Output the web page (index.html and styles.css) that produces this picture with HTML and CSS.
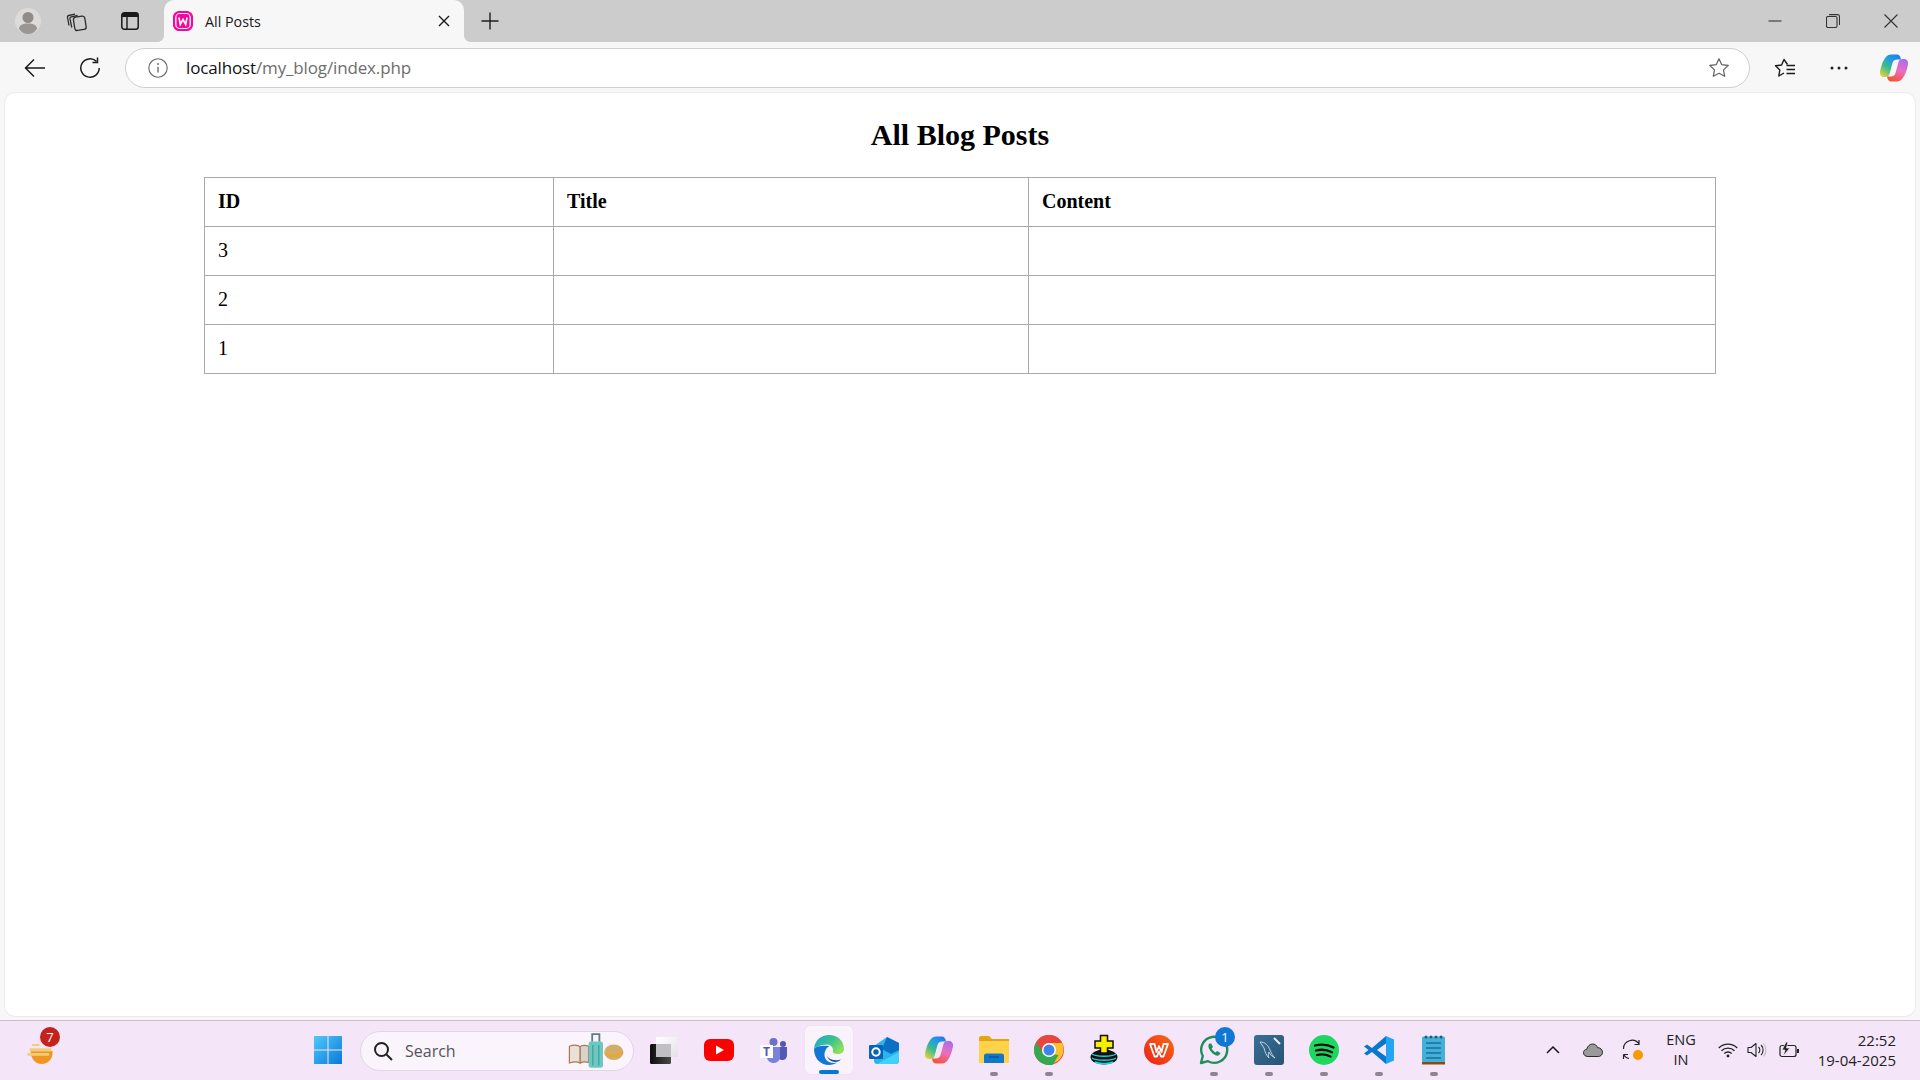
FILE: index.html
```html
<!DOCTYPE html>
<html lang="en">
<head>
<meta charset="utf-8">
<title>All Posts</title>
<link rel="stylesheet" href="styles.css">
</head>
<body>
<div class="window">
  <header class="tabstrip">
    <div class="strip-btn profile">
      <svg width="26" height="26" viewBox="0 0 26 26"><circle cx="13" cy="13" r="13" fill="#dcdbd9"/><circle cx="13" cy="9.5" r="5.5" fill="#8f8c88"/><path d="M4 21c0-4 4-5.500 9-5.500s9 1.500 9 5.500c-2 3-5.500 5-9 5s-7-2-9-5z" fill="#9a9793"/></svg>
    </div>
    <div class="strip-btn">
      <svg width="22" height="22" viewBox="0 0 22 22" fill="none" stroke="#2b2b2b" stroke-width="1.300"><path d="M3 15.500 1.500 7.500c-.2-1 .3-1.800 1.300-2L9 4.200"/><path d="M5.800 17.500 4 8.800c-.2-1 .3-1.800 1.300-2l6.300-1.300"/><rect x="8" y="6.500" width="11.500" height="13.500" rx="2.500" transform="rotate(-9 14 13)"/></svg>
    </div>
    <div class="strip-btn">
      <svg width="20" height="20" viewBox="0 0 20 20"><rect x="1.800" y="1.800" width="16.400" height="16.400" rx="2.500" fill="none" stroke="#1a1a1a" stroke-width="1.500"/><path d="M2 2h16v4H2z" fill="#1a1a1a"/><path d="M7 6v12" stroke="#1a1a1a" stroke-width="1.400"/></svg>
    </div>
    <div class="tab">
      <svg class="favicon" width="20" height="20" viewBox="0 0 20 20"><rect x="1" y="1" width="18" height="18" rx="5.500" fill="none" stroke="#f5069f" stroke-width="2.200"/><rect x="3.500" y="3" width="13" height="14" rx="3" fill="#f5069f"/><path d="M6 6.500 7.300 13.500 10 8.500 12.700 13.500 14 6.500" fill="none" stroke="#fff" stroke-width="1.600"/></svg>
      <span class="tab-title">All Posts</span>
      <svg class="tab-close" width="12" height="12" viewBox="0 0 12 12"><path d="M1 1l10 10M11 1 1 11" stroke="#1a1a1a" stroke-width="1.400"/></svg>
    </div>
    <div class="new-tab">
      <svg width="18" height="18" viewBox="0 0 18 18"><path d="M9 .5v17M.5 9h17" stroke="#1f1f1f" stroke-width="1.400"/></svg>
    </div>
    <div class="win-controls">
      <div class="win-btn"><svg width="14" height="14" viewBox="0 0 14 14"><path d="M.5 7h13" stroke="#333" stroke-width="1.100"/></svg></div>
      <div class="win-btn"><svg width="14" height="14" viewBox="0 0 14 14" fill="none" stroke="#333" stroke-width="1.100"><rect x=".5" y="2.500" width="10.500" height="11" rx="1.500"/><path d="M3 .6h8.500c1.200 0 2 .8 2 2V11"/></svg></div>
      <div class="win-btn"><svg width="14" height="14" viewBox="0 0 14 14"><path d="M.5.500l13 13M13.500.500l-13 13" stroke="#333" stroke-width="1.100"/></svg></div>
    </div>
  </header>

  <nav class="toolbar">
    <div class="tool-btn"><svg width="22" height="20" viewBox="0 0 22 20" fill="none" stroke="#1a1a1a" stroke-width="1.500"><path d="M21 10H1.500M10 1.500 1.500 10l8.500 8.500"/></svg></div>
    <div class="tool-btn"><svg width="22" height="22" viewBox="0 0 22 22" fill="none" stroke="#1a1a1a" stroke-width="1.500"><path d="M17.500 4.500A9.200 9.200 0 1 0 20.200 11"/><path d="M18.500 .5v5h-5"/></svg></div>
    <div class="address">
      <svg width="20" height="20" viewBox="0 0 20 20"><circle cx="10" cy="10" r="9.200" fill="none" stroke="#666" stroke-width="1.100"/><path d="M10 8.800v5.700" stroke="#666" stroke-width="1.300"/><circle cx="10" cy="6" r=".9" fill="#666"/></svg>
      <span class="url"><span class="url-host">localhost</span>/my_blog/index.php</span>
      <svg class="fav-star" width="22" height="22" viewBox="0 0 22 22"><path d="M11 1.800l2.800 5.900 6.400.8-4.700 4.400 1.200 6.400L11 16.200l-5.700 3.100 1.200-6.400L1.800 8.500l6.400-.8z" fill="none" stroke="#6a6a6a" stroke-width="1.300" stroke-linejoin="round"/></svg>
    </div>
    <div class="tool-right">
      <div class="tool-btn"><svg width="22" height="20" viewBox="0 0 22 20" fill="none" stroke="#1a1a1a" stroke-width="1.400" stroke-linejoin="round"><path d="M13.500 6.500 10 1.500 7.600 7 1.500 7.800 5.800 12l-1 6 5.200-3"/><path d="M12.500 7.500H21M12.500 11.500H21M12.500 15.500H21" stroke-width="1.300"/></svg></div>
      <div class="tool-btn"><svg width="18" height="4" viewBox="0 0 18 4"><circle cx="2" cy="2" r="1.500" fill="#222"/><circle cx="9" cy="2" r="1.500" fill="#222"/><circle cx="16" cy="2" r="1.500" fill="#222"/></svg></div>
      <div class="tool-btn copilot-btn">
        <svg width="30" height="30" viewBox="0 0 30 30"><defs><linearGradient id="cp1" x1=".1" y1="1" x2=".8" y2="0"><stop offset="0" stop-color="#efd23a"/><stop offset=".4" stop-color="#3dbd88"/><stop offset=".75" stop-color="#1f9ae8"/><stop offset="1" stop-color="#1e7fe6"/></linearGradient><linearGradient id="cp2" x1=".4" y1="1" x2=".8" y2="0"><stop offset="0" stop-color="#f4553a"/><stop offset=".5" stop-color="#ea6fc0"/><stop offset="1" stop-color="#a56df0"/></linearGradient></defs><path d="M12 1.500h6c2 0 3 1.500 3.500 3l.5 2h-3.500c-3 0-4.500 1.500-5 3.500L10.500 21c-.5 2-2 3-4 3H5C2 24 .5 21.500 1 18.500 2 13 4 7.500 6.500 4.500 8 2.500 10 1.500 12 1.500z" fill="url(#cp1)"/><path d="M18 28.500h-6c-2 0-3-1.500-3.500-3l-.5-2h3.500c3 0 4.500-1.500 5-3.500L19.500 9c.5-2 2-3 4-3H25c3 0 4.500 2.500 4 5.500-1 5.500-3 11-5.500 14-1.500 2-3.500 3-5.500 3z" fill="url(#cp2)"/></svg>
      </div>
    </div>
  </nav>

  <main class="page">
    <h2 class="page-title">All Blog Posts</h2>
    <table class="posts">
      <colgroup><col class="col-id"><col class="col-title"><col class="col-content"></colgroup>
      <thead><tr><th>ID</th><th>Title</th><th>Content</th></tr></thead>
      <tbody>
        <tr><td>3</td><td></td><td></td></tr>
        <tr><td>2</td><td></td><td></td></tr>
        <tr><td>1</td><td></td><td></td></tr>
      </tbody>
    </table>
  </main>

  <footer class="taskbar">
    <div class="widget">
      <svg width="29" height="26" viewBox="0 0 26 24"><path d="M4 11h20c1 7-4 12-10 12S4 18 4 11z" fill="#f0961e"/><path d="M3 8.500h20v3H3zM1 13h20v2.500H1zM5 4.500h7v2H5z" fill="#f1cc7c"/></svg>
      <span class="widget-badge">7</span>
    </div>
    <div class="tb-cell">
      <svg width="30" height="30" viewBox="0 0 30 30"><defs><linearGradient id="w1" x1="0" y1="0" x2="1" y2="1"><stop offset="0" stop-color="#4fc9fb"/><stop offset="1" stop-color="#0a78d8"/></linearGradient></defs><path d="M1 1h13.500v13.500H1zM15.500 1H29v13.500H15.500zM1 15.500h13.500V29H1zM15.500 15.500H29V29H15.500z" fill="url(#w1)"/></svg>
    </div>
    <div class="search">
      <svg width="20" height="20" viewBox="0 0 20 20" fill="none" stroke="#222" stroke-width="2"><circle cx="8.500" cy="8.500" r="6.500"/><path d="M13.500 13.500 19 19"/></svg>
      <span class="search-text">Search</span>
      <svg class="search-art" width="58" height="36" viewBox="0 0 48 30"><path d="M1 11c3-1 7-1 9 .5V25c-2-1-6-1-9 0z" fill="#e9e1d6" stroke="#a77a55"/><path d="M17 11c-2-1-6-1-7 .5V25c2-1 5-1 7-.5z" fill="#d8d2c8" stroke="#a77a55"/><rect x="17" y="7" width="12" height="22" rx="2" fill="#6cc9c1"/><path d="M20 7V1h6v6" fill="none" stroke="#5a7c86" stroke-width="1.500"/><path d="M20.500 10v17M25.500 10v17" stroke="#3f9f98"/><ellipse cx="38" cy="16" rx="8" ry="6.500" fill="#d4ad6a"/><path d="M31 17c3 3 10 3 14-1" fill="none" stroke="#e6a92e" stroke-width="2"/></svg>
    </div>
    <div class="tb-icons">
      <div class="tb-cell">
        <svg width="30" height="30" viewBox="0 0 30 30"><defs><linearGradient id="bx1" x1="0" y1="0" x2="1" y2="0"><stop offset="0" stop-color="#0d0d0d"/><stop offset="1" stop-color="#4a4a4a"/></linearGradient><linearGradient id="bx2" x1="0" y1="0" x2="1" y2="1"><stop offset="0" stop-color="#fff"/><stop offset="1" stop-color="#e6dfe8"/></linearGradient></defs><rect x="1" y="9" width="21" height="20" rx="1.500" fill="url(#bx1)"/><rect x="7" y="2" width="22" height="20" rx="1" fill="url(#bx2)"/><rect x="7" y="9" width="15" height="13" fill="#c2bfc4"/></svg>
      </div>
      <div class="tb-cell">
        <svg width="30" height="22" viewBox="0 0 30 22"><rect width="30" height="22" rx="6" fill="#fe0000"/><path d="M12 6.500v9l8-4.500z" fill="#fff"/></svg>
      </div>
      <div class="tb-cell">
        <svg width="30" height="26" viewBox="0 0 30 26"><circle cx="14.500" cy="5" r="4" fill="#6e6fc8"/><circle cx="24" cy="7" r="3" fill="#5458b0"/><path d="M18 10h10v8c0 3-2 5-4.500 5S18 21 18 18z" fill="#5458b0"/><path d="M8 10h13v10c0 3.500-3 6-6.500 6S8 23.500 8 20z" fill="#7b83d8"/><rect x="1" y="8" width="13" height="13" fill="#fff"/><text x="7.500" y="18.500" class="teams-t">T</text></svg>
      </div>
      <div class="tb-cell edge-cell">
        <div class="edge-tile">
          <svg width="32" height="32" viewBox="0 0 32 32"><defs><linearGradient id="e1" x1="0" y1="0" x2="1" y2=".6"><stop offset="0" stop-color="#18a4d8"/><stop offset=".6" stop-color="#3cc48c"/><stop offset="1" stop-color="#8fe05a"/></linearGradient></defs><path d="M1 15C1.500 6.500 8 1 16 1c8.500 0 15 6 15 14 0 3-2.500 5-6.500 5-3 0-5-1-4.500-2.500.8-2-1-7-6-7-6 0-12 3-13.500 4.500z" fill="url(#e1)"/><path d="M1 15c0 9 6 16 15 16 3 0 6-1 8-2.500-6 1.500-12-1-12.500-7-.3-4 2-8 5-9.500C10 11 3 12 1 15z" fill="#1277d2"/><path d="M14 22c1 4 6 7 11 5.500 1-.5 2-1 3-2-5 1.500-12 .5-14-3.500z" fill="#0c59a4"/></svg>
          <span class="indicator-active"></span>
        </div>
      </div>
      <div class="tb-cell">
        <svg width="30" height="28" viewBox="0 0 30 28"><path d="M5 10 18 1l12 6v18c0 1.500-1 3-3 3H8c-2 0-3-1.500-3-3z" fill="#2ab4ee"/><path d="M18 1 30 7v7l-8 4-9-5z" fill="#0a70c4"/><path d="M8 28l22-12v9c0 1.500-1 3-3 3z" fill="#45d0f8"/><rect y="9" width="14" height="14" rx="1" fill="#0a64b4"/><circle cx="7" cy="16" r="3.700" fill="none" stroke="#fff" stroke-width="2"/></svg>
      </div>
      <div class="tb-cell">
        <svg width="30" height="30" viewBox="0 0 30 30"><defs><linearGradient id="cp3" x1=".1" y1="1" x2=".8" y2="0"><stop offset="0" stop-color="#efd23a"/><stop offset=".4" stop-color="#3dbd88"/><stop offset=".75" stop-color="#1f9ae8"/><stop offset="1" stop-color="#1e7fe6"/></linearGradient><linearGradient id="cp4" x1=".4" y1="1" x2=".8" y2="0"><stop offset="0" stop-color="#f4553a"/><stop offset=".5" stop-color="#ea6fc0"/><stop offset="1" stop-color="#a56df0"/></linearGradient></defs><path d="M12 1.500h6c2 0 3 1.500 3.500 3l.5 2h-3.500c-3 0-4.500 1.500-5 3.500L10.500 21c-.5 2-2 3-4 3H5C2 24 .5 21.500 1 18.500 2 13 4 7.500 6.500 4.500 8 2.500 10 1.500 12 1.500z" fill="url(#cp3)"/><path d="M18 28.500h-6c-2 0-3-1.500-3.500-3l-.5-2h3.500c3 0 4.500-1.500 5-3.500L19.500 9c.5-2 2-3 4-3H25c3 0 4.500 2.500 4 5.500-1 5.500-3 11-5.500 14-1.500 2-3.500 3-5.500 3z" fill="url(#cp4)"/></svg>
      </div>
      <div class="tb-cell running">
        <svg width="30" height="27" viewBox="0 0 30 27"><path d="M0 2c0-1 .8-2 2-2h8l3 3h17v4H0z" fill="#e5a50f"/><path d="M0 5h30v22H0z" fill="#ffd24a"/><path d="M5 20c0-1.500 1-2.500 2.500-2.500h15c1.500 0 2.500 1 2.500 2.500v7H5z" fill="#0f78c8"/><path d="M10 21h10" stroke="#0a4f8a" stroke-width="1.200"/></svg>
      </div>
      <div class="tb-cell running">
        <svg width="30" height="30" viewBox="0 0 30 30"><circle cx="15" cy="15" r="15" fill="#e8453c"/><path d="M15 8h13.200a15 15 0 0 1-9 20.400L9.500 18z" fill="#fbc02d"/><path d="M2 7.500A15 15 0 0 0 19.200 29.400L24.500 20 9.500 18z" fill="#34a853"/><path d="M2 7.500A15 15 0 0 1 28.200 8H15c-3.500 0-6 2-6.800 4.500z" fill="#e8453c"/><circle cx="15" cy="15" r="7" fill="#fff"/><circle cx="15" cy="15" r="5.500" fill="#3f83e8"/></svg>
      </div>
      <div class="tb-cell">
        <svg width="30" height="32" viewBox="0 0 30 32"><ellipse cx="15" cy="23" rx="13.500" ry="7.500" fill="#111"/><path d="M3 20c4 3 20 3 24 0M3 24c4 3 20 3 24 0M6 28c4 2 14 2 18 0" fill="none" stroke="#18d4d8" stroke-width="1.500"/><path d="M11.500 1.500h7v5.500H24v7h-5.500v5h-7v-5H6V7h5.500z" fill="#f7f000" stroke="#111" stroke-width="1.500"/></svg>
      </div>
      <div class="tb-cell">
        <svg width="30" height="30" viewBox="0 0 30 30"><defs><linearGradient id="wps" x1="0" y1="1" x2="1" y2="0"><stop offset="0" stop-color="#e8201c"/><stop offset="1" stop-color="#fb6a10"/></linearGradient></defs><circle cx="15" cy="15" r="15" fill="url(#wps)"/><path d="M6 9h4.500l2 8 2.500-6 2.500 6 2-8H24l-4.500 12.500h-2.500L15 16.500l-2 5h-2.500z" fill="none" stroke="#fff" stroke-width="1.800" stroke-linejoin="round"/></svg>
      </div>
      <div class="tb-cell running badge-host">
        <svg width="30" height="30" viewBox="0 0 30 30"><path d="M2 28l1.800-7A13 13 0 1 1 9 26.200z" fill="none" stroke="#1f8e5e" stroke-width="2.400" stroke-linejoin="round"/><path d="M10.500 8.500c-1.500 1-1.500 3.500 0 6 1.500 3 4 5 6.500 6 2 .5 4-.5 4.500-2.500l-3.500-2-1.500 1.500c-1.500-.8-3-2.500-3.800-4l1.300-1.500-1.800-3.500z" fill="#1f8e5e"/></svg>
        <span class="tb-badge">1</span>
      </div>
      <div class="tb-cell running">
        <svg width="30" height="30" viewBox="0 0 30 30"><defs><linearGradient id="my" x1="0" y1="0" x2="1" y2="1"><stop offset="0" stop-color="#3a6f94"/><stop offset="1" stop-color="#265475"/></linearGradient></defs><rect width="30" height="30" rx="3" fill="url(#my)"/><path d="M6 7c5 0 8 3 10 8 1 3 3 6 5 8-3-2-5-3-6-6-1 2-1 4 0 6-3-3-4-6-5-10-1-2-3-4-4-6z" fill="none" stroke="#cfdde6" stroke-width=".9"/><path d="M20 3l6 6" stroke="#e6eef3" stroke-width="2"/></svg>
      </div>
      <div class="tb-cell running">
        <svg width="30" height="30" viewBox="0 0 30 30"><circle cx="15" cy="15" r="15" fill="#1ed760"/><path d="M6 10.500c6-1.500 13-1 18.500 2M7 15.500c5-1.300 11-.8 16 1.800M8 20c4-1 9-.7 13.500 1.500" fill="none" stroke="#111" stroke-width="2.300" stroke-linecap="round"/></svg>
      </div>
      <div class="tb-cell running">
        <svg width="30" height="30" viewBox="0 0 30 30"><path d="M22 1l8 3.500v21L22 29V1z" fill="#24a5f2"/><path d="M22 1 8 13 3 9.500 0 11.500l4.500 3.500L0 18.500l3 2L8 17l14 12v-7.500L13 15l9-6.500z" fill="#0a78c8"/></svg>
      </div>
      <div class="tb-cell running">
        <svg width="24" height="30" viewBox="0 0 24 30"><rect y="1.500" width="23" height="26" rx="1.500" fill="#42b0d8"/><rect y="27" width="23" height="2.500" fill="#8a4a14"/><circle cx="4" cy="2" r="1.500" fill="#1d5f7c"/><circle cx="9" cy="2" r="1.500" fill="#1d5f7c"/><circle cx="14" cy="2" r="1.500" fill="#1d5f7c"/><circle cx="19" cy="2" r="1.500" fill="#1d5f7c"/><path d="M4 8h15M4 13h15M4 18h15M4 23h15" stroke="#1e6d92" stroke-width="1.500"/></svg>
      </div>
    </div>
    <div class="tray">
      <svg class="tray-chevron" width="14" height="8" viewBox="0 0 14 8"><path d="M1 7l6-6 6 6" fill="none" stroke="#1a1a1a" stroke-width="1.500"/></svg>
      <svg class="tray-cloud" width="20" height="14" viewBox="0 0 20 14"><path d="M5 13.500c-3 0-4.500-1.800-4.500-3.800 0-2 1.500-3.400 3.300-3.500C4.500 3 7 1 9.500 1c2.500 0 4.400 1.500 5 3.600 2.800.1 5 2 5 4.700 0 2.500-1.900 4.200-4.300 4.200z" fill="#9a9a9a" stroke="#2a2a2a" stroke-width="1"/></svg>
      <svg class="tray-sync" width="22" height="22" viewBox="0 0 22 22" fill="none" stroke="#222" stroke-width="1.200"><path d="M1.500 10A8.500 8.500 0 0 1 17 5M17 1v4.500h-4.500"/><path d="M1.500 15.500h4.500M1.500 15.500V20M1.500 15.500A8 8 0 0 0 7 19.500"/><circle cx="16" cy="16" r="5" fill="#f59a00" stroke="none"/></svg>
      <div class="tray-lang"><span>ENG</span><span>IN</span></div>
      <svg class="tray-wifi" width="20" height="15" viewBox="0 0 20 15" fill="none" stroke="#222" stroke-width="1.300"><path d="M.8 5a13 13 0 0 1 18.400 0M3.500 7.800a9.300 9.300 0 0 1 13 0M6.300 10.500a5.300 5.300 0 0 1 7.400 0"/><circle cx="10" cy="13" r="1.400" fill="#222" stroke="none"/></svg>
      <svg class="tray-sound" width="20" height="16" viewBox="0 0 20 16" fill="none" stroke="#222" stroke-width="1.100"><path d="M1 5.500h3L9 1.500v13l-5-4H1z" stroke-linejoin="round"/><path d="M11.500 5a4 4 0 0 1 0 6"/><path d="M14 3a7 7 0 0 1 0 10"/><path d="M16.500 1.500a10 10 0 0 1 0 13" stroke="#bbb"/></svg>
      <svg class="tray-batt" width="21" height="16" viewBox="0 0 21 16"><rect x="1" y="3.500" width="16" height="11" rx="2" fill="none" stroke="#222" stroke-width="1.200"/><rect x="18" y="7" width="2" height="4" fill="#222"/><path d="M7 0 3 8h3l-2 6 7-8H7.500L9 0z" fill="#222" stroke="#f4e6f8" stroke-width=".8"/></svg>
      <div class="tray-clock"><span>22:52</span><span>19-04-2025</span></div>
    </div>
  </footer>
</div>
</body>
</html>
```
FILE: styles.css
```css
* { box-sizing: border-box; }
html, body { margin: 0; height: 100%; }
body { font-family: "Open Sans", "Noto Sans", sans-serif; background: #f7f7f7; color: #000; overflow: hidden; }
svg { display: block; flex: none; }

.window { display: flex; flex-direction: column; height: 1080px; }

/* Tab strip */
.tabstrip { display: flex; align-items: center; height: 42px; background: #cccccc; flex: none; }
.strip-btn { width: 53px; height: 42px; display: flex; align-items: center; justify-content: center; }
.profile { width: 56px; }
.tabstrip .strip-btn:nth-child(2) { width: 42px; }
.tabstrip .strip-btn:nth-child(3) { width: 64px; }
.tab { position: relative; width: 300px; height: 42px; margin-left: 2px; padding: 0 14px 0 9px; background: #f7f7f7; border-radius: 10px 10px 0 0; display: flex; align-items: center; }
.tab::before, .tab::after { content: ""; position: absolute; bottom: 0; width: 6px; height: 6px; background: radial-gradient(circle at 0 0, #cccccc 5.500px, #f7f7f7 6px); }
.tab::before { left: -6px; }
.tab::after { right: -6px; transform: scaleX(-1); }
.tab-title { margin-left: 12px; font-size: 14.300px; color: #1a1a1a; }
.tab-close { margin-left: auto; }
.new-tab { width: 52px; display: flex; justify-content: center; }
.win-controls { margin-left: auto; display: flex; }
.win-btn { width: 58px; display: flex; justify-content: center; }

/* Toolbar */
.toolbar { display: flex; align-items: center; height: 51px; padding: 0 4px 0 13px; gap: 11px; background: #f7f7f7; flex: none; }
.tool-btn { width: 44px; height: 40px; display: flex; align-items: center; justify-content: center; flex: none; }
.address { flex: 1; height: 40px; margin: 0 2px; display: flex; align-items: center; padding: 0 19px 0 22px; background: #fff; border: 1px solid #cfcfcf; border-radius: 20px; }
.url { margin-left: 18px; font-size: 17px; color: #6d6d6d; letter-spacing: -.14px; }
.url-host { color: #111; }
.fav-star { margin-left: auto; }
.tool-right { display: flex; align-items: center; gap: 10px; }
.copilot-btn { margin-left: 1px; }

/* Page */
.page { flex: 1; min-height: 0; margin: 0 5px 4px; padding-top: 24px; background: #fff; border-radius: 10px; box-shadow: 0 0 0 1px #ececec; display: flex; flex-direction: column; align-items: center; font-family: "Liberation Serif", "Times New Roman", serif; }
.page-title { margin: 0 0 25px; font-size: 30px; line-height: 35px; font-weight: 700; }
.posts { width: 1512px; border-collapse: collapse; table-layout: fixed; font-size: 20px; line-height: 23px; }
.col-id { width: 349px; }
.col-title { width: 475px; }
.posts th, .posts td { height: 49px; padding: 11px 12px 13px 13px; border: 1.500px solid #a9a9a9; text-align: left; }
.posts th { font-weight: 700; }

/* Taskbar */
.taskbar { display: flex; align-items: center; height: 60px; background: #f4e6f8; border-top: 1px solid #c9bccd; flex: none; }
.widget { position: relative; width: 300px; padding-left: 26px; margin-top: 2px; }
.widget-badge { position: absolute; left: 40px; top: -12px; width: 20px; height: 20px; border-radius: 50%; background: #c4231b; color: #fff; font-size: 13px; line-height: 20px; text-align: center; }
.tb-cell { position: relative; width: 55px; height: 59px; padding-bottom: 2px; display: flex; align-items: center; justify-content: center; flex: none; }
.search { width: 274px; height: 40px; margin-left: 5px; padding: 0 7px 0 12px; display: flex; align-items: center; background: #fbf4fd; border: 1px solid #e2d5e6; border-radius: 20px; }
.search-text { margin-left: 12px; font-size: 16px; color: #555; }
.search-art { margin-left: auto; }
.tb-icons { display: flex; margin-left: 2px; }
.edge-tile { position: relative; width: 48px; height: 48px; background: #faf3fc; border-radius: 5px; box-shadow: 0 0 1px rgba(0,0,0,.12); display: flex; align-items: center; justify-content: center; }
.indicator-active { position: absolute; left: 14px; bottom: 0; width: 20px; height: 4px; border-radius: 2px; background: #0078d4; }
.running::after { content: ""; position: absolute; left: 50%; bottom: 4px; width: 8px; height: 4px; margin-left: -4px; border-radius: 2px; background: #8d858f; }
.tb-badge { position: absolute; left: 29px; top: 6px; width: 20px; height: 20px; border-radius: 50%; background: #0f78d4; color: #fff; font-size: 13px; line-height: 20px; text-align: center; }
.teams-t { font-family: "Open Sans", sans-serif; font-size: 12px; font-weight: 700; fill: #5458b0; text-anchor: middle; }

/* Tray */
.tray { flex: 1; display: flex; align-items: center; color: #222; font-size: 15px; padding-bottom: 1px; }
.tray-chevron { margin-left: 85px; }
.tray-cloud { margin-left: 23px; }
.tray-sync { margin-left: 19px; }
.tray-lang { width: 50px; margin-left: 12px; display: flex; flex-direction: column; align-items: center; font-size: 14.500px; line-height: 20px; }
.tray-wifi { margin-left: 12px; }
.tray-sound { margin-left: 9px; }
.tray-batt { margin-left: 12px; }
.tray-clock { margin-left: auto; margin-right: 24px; display: flex; flex-direction: column; align-items: flex-end; line-height: 20px; }
```
